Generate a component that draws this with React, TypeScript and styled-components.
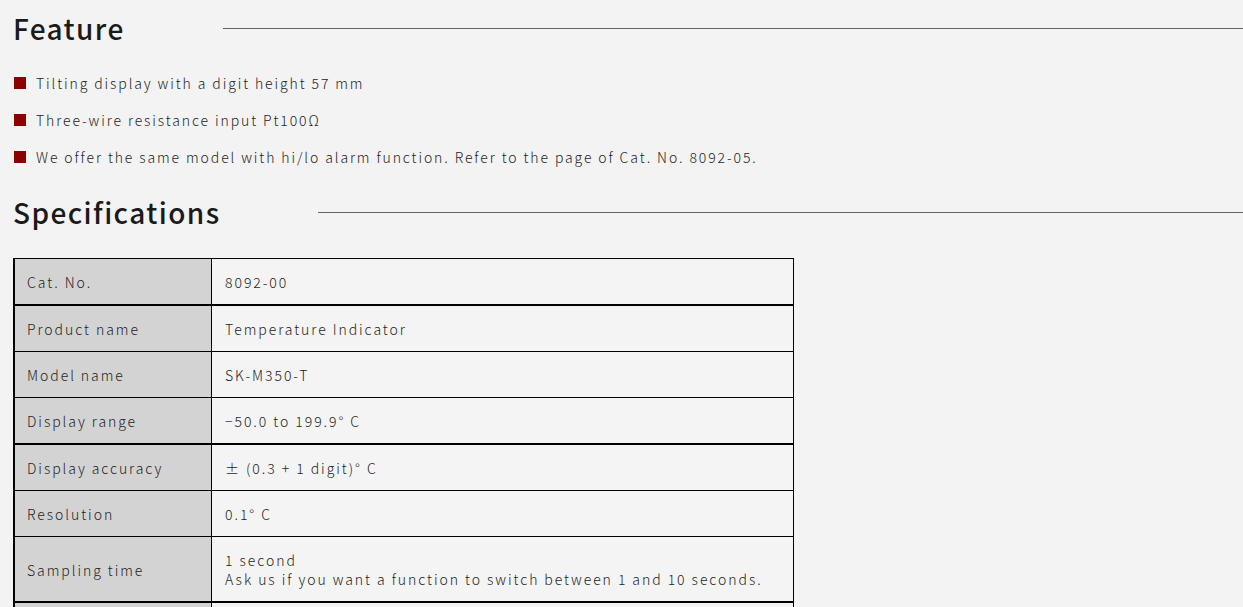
import React from "react";
import styled, { createGlobalStyle } from "styled-components";

const Global = createGlobalStyle`
  html, body { margin: 0; padding: 0; background: #f3f3f3; }
  body {
    font-family: "Noto Sans CJK JP", "Noto Sans", sans-serif;
    font-weight: 300;
    color: #1e1e1e;
  }
`;

const Page = styled.div`
  padding: 0 0 0 13px;
  display: flex;
  flex-direction: column;
`;

const Heading = styled.div<{ $top: number }>`
  display: flex;
  align-items: center;
  gap: 98px;
  margin-top: ${(p) => p.$top}px;
  height: 40px;
`;

const HeadingText = styled.h2`
  margin: 0;
  font-size: 28px;
  font-weight: 500;
  letter-spacing: 1.4px;
  color: #1a1a1a;
  line-height: 40px;
`;

const Rule = styled.div`
  flex: 1;
  height: 1px;
  background: #666;
`;

const List = styled.ul`
  list-style: none;
  margin: 25px 0 0;
  padding: 0;
  display: flex;
  flex-direction: column;
  gap: 17px;
`;

const Item = styled.li`
  display: flex;
  align-items: center;
  gap: 10px;
  font-size: 14px;
  line-height: 20px;
  letter-spacing: 1.9px;
`;

const Square = styled.span`
  width: 12px;
  height: 12px;
  background: #8b0000;
  flex: none;
  margin-left: 1px;
`;

const Table = styled.table`
  margin-top: 26px;
  width: 781px;
  border-collapse: collapse;
  border-left: 2px solid #000;
  border-right: 1px solid #000;
  border-top: 1px solid #000;
  font-size: 14px;
  letter-spacing: 1.95px;
`;

const Row = styled.tr<{ $thick?: boolean }>`
  border-top: ${(p) => (p.$thick ? 2 : 1)}px solid #000;
`;

const Label = styled.td`
  width: 172px;
  background: #d3d3d3;
  border-right: 1px solid #000;
  padding: 14px 12px 12px;
  line-height: 19px;
  vertical-align: middle;
`;

const Value = styled.td`
  padding: 14px 13px 12px;
  line-height: 19px;
  background: #f4f4f4;
  vertical-align: middle;
`;

const rows: { label: string; value: React.ReactNode; thick?: boolean }[] = [
  { label: "Cat. No.", value: "8092-00" },
  { label: "Product name", value: "Temperature Indicator", thick: true },
  { label: "Model name", value: "SK-M350-T" },
  { label: "Display range", value: "−50.0 to 199.9° C" },
  { label: "Display accuracy", value: "± (0.3 + 1 digit)° C", thick: true },
  { label: "Resolution", value: "0.1° C" },
  {
    label: "Sampling time",
    value: (
      <>
        1 second
        <br />
        Ask us if you want a function to switch between 1 and 10 seconds.
      </>
    ),
  },
  { label: "", value: "", thick: true },
];

export default function App() {
  return (
    <>
      <Global />
      <Page>
        <Heading $top={8}>
          <HeadingText>Feature</HeadingText>
          <Rule />
        </Heading>
        <List>
          <Item>
            <Square />
            Tilting display with a digit height 57 mm
          </Item>
          <Item>
            <Square />
            Three-wire resistance input Pt100Ω
          </Item>
          <Item>
            <Square />
            We offer the same model with hi/lo alarm function. Refer to the page of Cat. No. 8092-05.
          </Item>
        </List>
        <Heading $top={25}>
          <HeadingText>Specifications</HeadingText>
          <Rule />
        </Heading>
        <Table>
          <tbody>
            {rows.map((r, i) => (
              <Row key={i} $thick={r.thick}>
                <Label>{r.label || "\u00a0"}</Label>
                <Value>{r.value || "\u00a0"}</Value>
              </Row>
            ))}
          </tbody>
        </Table>
      </Page>
    </>
  );
}
